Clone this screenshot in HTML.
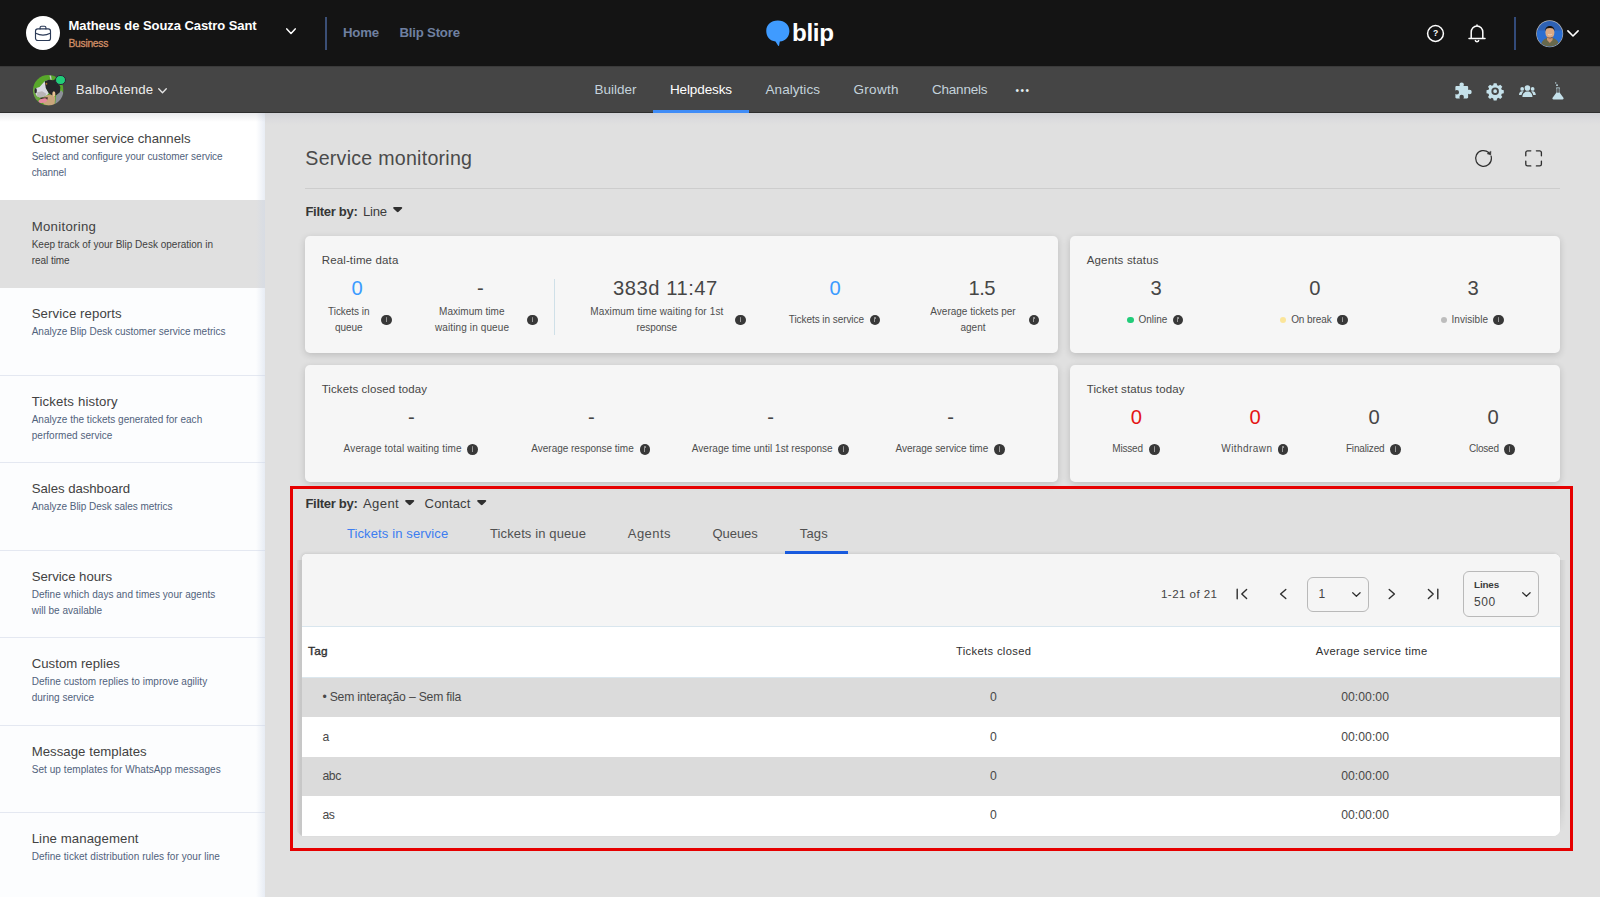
<!DOCTYPE html>
<html lang="en">
<head>
<meta charset="utf-8">
<title>Blip - Service monitoring</title>
<style>
*{box-sizing:border-box;margin:0;padding:0}
html,body{width:1600px;height:897px;overflow:hidden}
body{position:relative;background:#e0e0e0;font-family:"Liberation Sans",sans-serif;color:#3c3c3c}
.abs{position:absolute}
.t{position:absolute;white-space:nowrap;line-height:1}
#topbar{position:absolute;left:0;top:0;width:1600px;height:66px;background:#141414}
#subbar{position:absolute;left:0;top:66px;width:1600px;height:46.5px;background:#454545;border-top:1px solid #3a3a3a;border-bottom:1.200px solid #2e2e2e}
#sidebar{position:absolute;left:0;top:112.5px;width:265px;height:785px;background:#fcfdfe}
#sbedge{position:absolute;left:256px;top:112.5px;width:9px;height:785px;background:linear-gradient(90deg,rgba(205,215,232,0),rgba(205,215,232,.45))}
.sitem{position:absolute;left:0;width:265px;height:88.300px;border-bottom:1px solid #e4e8f1}
.sitem.first{background:#fff;border-bottom:none;height:87.500px}
.sitem.sel{background:#e0e0e0;border-bottom:none;height:87.700px}
.card{position:absolute;background:#f6f6f6;border-radius:5px;box-shadow:0 2px 7px rgba(0,0,0,.16)}
.info{position:absolute;width:10.8px;height:10.8px;border-radius:50%;background:#383838}
.info:after{content:"";position:absolute;left:4.9px;top:4.6px;width:1px;height:3.2px;background:#9a9a9a}
.info:before{content:"";position:absolute;left:4.8px;top:2.7px;width:1.2px;height:1.2px;border-radius:50%;background:#9a9a9a}
.dot{position:absolute;width:6.4px;height:6.4px;border-radius:50%}
.caret{position:absolute;width:9.400px;height:5.200px}
#redbox{position:absolute;left:290.200px;top:486.200px;width:1283px;height:365.300px;border:3px solid #e60000}
#tablecard{position:absolute;left:301.600px;top:554px;width:1258.600px;height:282px;background:#fff;border-radius:5px 6px 7px 0;overflow:hidden}
#tshadow{position:absolute;left:301.600px;top:554px;width:1258.600px;height:282px;border-radius:5px 6px 7px 0;box-shadow:-1px -1px 3px rgba(0,0,0,.09)}
#tstripr{position:absolute;left:1560.200px;top:560px;width:6px;height:272px;background:linear-gradient(90deg,rgba(0,0,0,.085),rgba(0,0,0,0));-webkit-mask-image:linear-gradient(#000 90%,transparent);mask-image:linear-gradient(#000 90%,transparent)}
#tstrip{position:absolute;left:296.600px;top:560px;width:5px;height:276px;background:linear-gradient(90deg,rgba(0,0,0,.03),rgba(0,0,0,.10));clip-path:polygon(0 0,100% 0,100% 100%,0 calc(100% - 5px))}
.row{position:absolute;left:0;width:1259px}
.sel-box{position:absolute;border:1px solid #b9b9b9;border-radius:6px;background:#f5f5f5}
svg{position:absolute;overflow:visible}
</style>
</head>
<body>

<!-- ===== top bar ===== -->
<div id="topbar"></div>
<div class="abs" style="left:26px;top:16px;width:34px;height:34px;border-radius:50%;background:#fff"></div>
<svg style="left:34px;top:24px" width="18" height="18" viewBox="0 0 18 18" fill="none" stroke="#2b3a57" stroke-width="1.150" stroke-linecap="round" stroke-linejoin="round">
  <rect x="1.500" y="4.900" width="15" height="11.600" rx="2.300"/>
  <path d="M6.100 4.900V3.600a1.400 1.400 0 0 1 1.400-1.400h3a1.400 1.400 0 0 1 1.400 1.400v1.300"/>
  <path d="M1.700 9.300c4.600 2.300 10 2.300 14.600 0"/>
</svg>
<svg style="left:286px;top:28px" width="10" height="7" viewBox="0 0 10 7" fill="none" stroke="#fff" stroke-width="1.5" stroke-linecap="round" stroke-linejoin="round"><path d="M0.8 0.9 5 5.4 9.2 0.9"/></svg>
<div class="abs" style="left:325px;top:16.5px;width:1.5px;height:33px;background:#3b4f76"></div>

<!-- logo -->
<svg style="left:765px;top:19px" width="26" height="28" viewBox="0 0 26 28">
  <path d="M12.800 1.600C5.800 1.600 1.250 5.800 1.250 12c0 5.800 3.750 9.800 9.250 10.500l2.500 4.100c.3.500 1 .400 1.100-.200l.700-3.800C20.600 22 24.400 17.800 24.400 12 24.400 5.800 19.800 1.600 12.800 1.600z" fill="#3f9bff"/>
</svg>

<!-- right icons -->
<svg style="left:1426px;top:24px" width="19" height="19" viewBox="0 0 19 19" fill="none" stroke="#fff" stroke-width="1.5"><circle cx="9.5" cy="9.5" r="7.9"/></svg>
<svg style="left:1467px;top:21.700px" width="20" height="21" viewBox="0 0 20 21" fill="none" stroke="#fff" stroke-width="1.5" stroke-linecap="round" stroke-linejoin="round">
  <path d="M2 16.600h16M4.2 16.400V10.200a5.800 6.300 0 0 1 11.600 0v6.200M10 3.600V2.900"/>
  <path d="M8.300 18.600a1.800 1.600 0 0 0 3.400 0"/>
</svg>
<div class="abs" style="left:1514.2px;top:16.5px;width:1.6px;height:33.5px;background:#334b7a"></div>
<!-- avatar -->
<svg style="left:1535.600px;top:19.500px" width="27.400" height="27.400" viewBox="0 0 27.400 27.400">
  <defs><clipPath id="av"><circle cx="13.700" cy="13.700" r="12.700"/></clipPath></defs>
  <circle cx="13.700" cy="13.700" r="13.500" fill="#b4b6ba"/>
  <g clip-path="url(#av)">
    <rect width="27.400" height="27.400" fill="#2f62b4"/>
    <rect y="10.500" width="27.400" height="17" fill="#2c6fd2"/>
    <path d="M4.300 27.400c.6-5.600 3.600-8.300 6.600-9.300l6.200-.1c3.600 1.200 6 4 6.600 9.400z" fill="#67684c"/>
    <path d="M11 16.500h5.600v3.500l-2.800 3-2.800-3z" fill="#c99672"/>
    <ellipse cx="13.900" cy="12.600" rx="4.500" ry="6" fill="#dba983"/>
    <path d="M9.300 11c-.6-6.800 9.800-6.800 9.200 0-.8-2.400-1.600-3-4.600-3s-3.800.6-4.600 3z" fill="#16110e"/>
    <path d="M10.600 16.200c1 2.600 5.400 2.800 6.600.2-1 .9-1.800 1.400-3.300 1.400s-2.400-.6-3.300-1.600z" fill="#1a1320"/>
    <path d="M11.900 14.300c1 .8 2.900.8 3.900 0" stroke="#f3e3d8" stroke-width="0.700" fill="none"/>
  </g>
</svg>
<svg style="left:1567px;top:30px" width="12" height="8" viewBox="0 0 12 8" fill="none" stroke="#fff" stroke-width="1.6" stroke-linecap="round" stroke-linejoin="round"><path d="M0.9 0.9 6 6 11.100 0.900"/></svg>

<!-- ===== sub bar ===== -->
<div id="subbar"></div>
<!-- bot avatar -->
<svg style="left:33.100px;top:74.700px" width="30.500" height="30.500" viewBox="0 0 30 30">
  <defs><clipPath id="bv"><circle cx="15" cy="15" r="15"/></clipPath><filter id="bl" x="-10%" y="-10%" width="120%" height="120%"><feGaussianBlur stdDeviation="0.45"/></filter></defs>
  <g clip-path="url(#bv)"><g filter="url(#bl)">
    <rect width="30" height="30" fill="#58a72c"/>
    <path d="M0 12l4 4 2 8-6 2z" fill="#6aa740"/>
    <path d="M16.200 0.500l1 4.200 1.200-.1-.7-4.100z" fill="#c9c9d0"/>
    <path d="M22.800 20l5.100-5.100 2.100 3-2.100 7.200-6.100 4.100z" fill="#8d9098"/>
    <path d="M13.600 20l5.100-1 3.100 3-.5 7.200-5.700 1.100-5.100-1.600L9 23z" fill="#c9a57c"/>
    <path d="M1.800 13.300l4.600-1.500 5.100-5.600 3.100-1.100-2 7.700 3 5.100-2 2.100-5.100 2-4.700-1-2-4.100z" fill="#d9d9e2"/>
    <path d="M4 17l5-1 4 2.500-1 2.500-5 1.500-3-1.500z" fill="#b9b5b8"/>
    <path d="M11.500 6.200l4.100-1.600 4.100.5 3.100-1.500 4.100 8.200-.5 5.100-3.600 3.100h-4.100l-3.100-2.100-3-5.100z" fill="#26272b"/>
    <ellipse cx="20.500" cy="18.700" rx="1.500" ry="2.600" fill="#e8c090"/>
    <ellipse cx="13.200" cy="8.600" rx="0.900" ry="1.100" fill="#b87333"/>
    <ellipse cx="2.600" cy="15.500" rx="1.200" ry="2.600" fill="#2b2b2e"/>
    <path d="M7 22.300l7.600-.3-.6 2.400-5 1.600z" fill="#3a2a2a"/>
    <ellipse cx="9.600" cy="25.300" rx="4.300" ry="2.100" fill="#e58aa0" transform="rotate(-12 9.600 25.300)"/>
  </g></g>
</svg>
<div class="abs" style="left:55.300px;top:75px;width:10.400px;height:10.400px;border-radius:50%;background:#21cc79;border:1.100px solid #2b2238"></div>
<svg style="left:158px;top:88px" width="9" height="6" viewBox="0 0 9 6" fill="none" stroke="#e6e6e6" stroke-width="1.300" stroke-linecap="round" stroke-linejoin="round"><path d="M0.700 0.800 4.500 4.800 8.300 0.800"/></svg>
<div class="abs" style="left:653.200px;top:110.200px;width:95.800px;height:2.500px;background:#3f8cf7"></div>

<!-- sub bar right icons -->
<svg style="left:1454.600px;top:82.200px" width="17.400" height="17.400" viewBox="0 0 18 18" fill="#c5e1ea">
  <path d="M6.900 0.400a2.300 2.300 0 0 1 2.300 2.300c0 .5-.2 1-.4 1.400h3.600c.7 0 1.200.5 1.200 1.200v3.100c.4-.3.900-.4 1.400-.4a2.300 2.300 0 0 1 0 4.600c-.5 0-1-.2-1.400-.4v3.700c0 .7-.5 1.200-1.200 1.200H8.700c.3-.4.500-.9.500-1.500a2.300 2.300 0 0 0-4.600 0c0 .6.200 1.100.5 1.500H1.600c-.7 0-1.200-.5-1.200-1.200v-3.500c.4.300.9.500 1.500.5a2.300 2.300 0 0 0 0-4.600c-.6 0-1.100.2-1.500.5V5.300c0-.7.500-1.200 1.200-1.200H5c-.3-.4-.4-.9-.4-1.400A2.300 2.300 0 0 1 6.900.4z"/>
</svg>
<svg style="left:1486.800px;top:82.500px" width="16.300" height="16.300" viewBox="-10 -10 20 20" fill="#c5e1ea">
  <path fill-rule="evenodd" d="M-1.800-9.800h3.600l.6 2.500 1.700.7 2.200-1.400 2.500 2.500-1.400 2.200.7 1.700 2.500.6v3.600l-2.500.6-.7 1.700 1.400 2.200-2.500 2.500-2.200-1.400-1.700.7-.6 2.500h-3.600l-.6-2.500-1.700-.7-2.200 1.400-2.500-2.500 1.400-2.200-.7-1.700-2.500-.6v-3.600l2.500-.6.7-1.700-1.400-2.200 2.500-2.500 2.200 1.400 1.700-.7zM0-4.600a4.600 4.600 0 1 0 0 9.200 4.600 4.600 0 0 0 0-9.200zM0-2.300a2.300 2.300 0 1 1 0 4.600 2.300 2.300 0 0 1 0-4.600z"/>
</svg>
<svg style="left:1518.600px;top:84.800px" width="16.800" height="12.200" viewBox="0 0 18 13" fill="#c5e1ea">
  <circle cx="9" cy="3.200" r="3"/><path d="M3.600 12.800c0-3.600 2.200-5.800 5.400-5.800s5.400 2.200 5.400 5.800z"/>
  <circle cx="3.400" cy="4.200" r="2"/><path d="M0 10.600c0-2.400 1.400-4 3.400-4 .6 0 1.100.1 1.500.4-1.200 1-1.900 2.200-2.200 3.600z"/>
  <circle cx="14.600" cy="4.200" r="2"/><path d="M18 10.600c0-2.400-1.400-4-3.400-4-.6 0-1.100.1-1.500.4 1.200 1 1.900 2.200 2.200 3.600z"/>
</svg>
<svg style="left:1552px;top:82px" width="12" height="17.500" viewBox="0 0 12 17.500" fill="#c5e1ea">
  <path d="M4.200 5.400h3.600v1H7.400v3.800l4 5.600c.5.800 0 1.700-.9 1.700H1.500c-.9 0-1.400-.9-.9-1.700l4-5.600V6.400H4.200z"/>
  <rect x="5.200" y="6.200" width="1.600" height="4.500" fill="#454545"/>
  <circle cx="5" cy="3.200" r="0.900"/><circle cx="3.700" cy="0.900" r="0.700"/>
</svg>

<!-- ===== sidebar ===== -->
<div id="sidebar"></div>
<div class="sitem first" style="top:112.500px"></div>
<div class="sitem sel" style="top:200px"></div>
<div class="sitem" style="top:287.500px"></div>
<div class="sitem" style="top:375px"></div>
<div class="sitem" style="top:462.500px"></div>
<div class="sitem" style="top:550px"></div>
<div class="sitem" style="top:637.500px"></div>
<div class="sitem" style="top:725px"></div>
<div class="sitem" style="top:812.500px;border-bottom:none"></div>

<div id="sbedge"></div>
<!-- ===== main ===== -->
<div class="abs" style="left:0;top:112.500px;width:265px;height:9px;background:linear-gradient(rgba(120,125,140,.16),rgba(120,125,140,0))"></div>
<div class="abs" style="left:265px;top:112.500px;width:1335px;height:12px;background:linear-gradient(#d2d3d7,#dcdcde 60%,#e0e0e0)"></div>
<div class="abs" style="left:305px;top:188px;width:1255px;height:1px;background:#cdcdcd"></div>
<!-- refresh -->
<svg style="left:1474px;top:149px" width="19" height="19" viewBox="0 0 19 19" fill="none" stroke="#2f2f2f" stroke-width="1.200" stroke-linecap="round">
  <path d="M14.700 3.500A7.900 7.900 0 1 0 17.400 9.200c0-.8-.1-1.500-.3-2.200"/>
  <path d="M16.900 2.500l-.2 3.500-3.300-1.200z" fill="#2f2f2f" stroke-width="0.500" stroke-linejoin="round"/>
</svg>
<!-- fullscreen -->
<svg style="left:1524.600px;top:150px" width="17.200" height="16.800" viewBox="0 0 17.500 17" fill="none" stroke="#2f2f2f" stroke-width="1.350" stroke-linecap="round" stroke-linejoin="round">
  <path d="M0.800 5.800V2.600a1.800 1.800 0 0 1 1.800-1.800h3.300M11.600 0.800h3.300a1.800 1.800 0 0 1 1.800 1.800v3.200M16.700 11.200v3.200a1.800 1.800 0 0 1-1.800 1.800h-3.300M5.900 16.200H2.600a1.800 1.800 0 0 1-1.800-1.800v-3.200"/>
</svg>
<svg class="caret" style="left:393px;top:207.200px" viewBox="0 0 9.4 5.2"><path d="M1.100 0h7.200c.9 0 1.300.9.700 1.500L5.600 4.800c-.5.500-1.300.5-1.800 0L.400 1.500C-.200.900.200 0 1.100 0z" fill="#303030"/></svg>

<!-- cards -->
<div class="card" style="left:305px;top:236px;width:752.500px;height:116.500px"></div>
<div class="card" style="left:1070px;top:236px;width:490px;height:116.500px"></div>
<div class="card" style="left:305px;top:365px;width:752.500px;height:116.500px"></div>
<div class="card" style="left:1070px;top:365px;width:490px;height:116.500px"></div>
<div class="abs" style="left:554px;top:279px;width:1px;height:56px;background:#cfe0e8"></div>

<div class="info" style="left:381.3px;top:314.7px"></div>
<div class="info" style="left:527.1px;top:314.7px"></div>
<div class="info" style="left:735.2px;top:314.7px"></div>
<div class="info" style="left:869.6px;top:314.7px"></div>
<div class="info" style="left:1028.6px;top:314.7px"></div>
<div class="info" style="left:1172.6px;top:314.7px"></div>
<div class="info" style="left:1337.1px;top:314.7px"></div>
<div class="info" style="left:1493.3px;top:314.7px"></div>
<div class="info" style="left:466.9px;top:443.8px"></div>
<div class="info" style="left:639.6px;top:443.8px"></div>
<div class="info" style="left:838.0px;top:443.8px"></div>
<div class="info" style="left:994.0px;top:443.8px"></div>
<div class="info" style="left:1148.8px;top:443.8px"></div>
<div class="info" style="left:1277.6px;top:443.8px"></div>
<div class="info" style="left:1390.1px;top:443.8px"></div>
<div class="info" style="left:1504.1px;top:443.8px"></div>
<div class="dot" style="left:1127.3px;top:316.7px;background:#21cc79"></div>
<div class="dot" style="left:1279.8px;top:316.7px;background:#fbe59a"></div>
<div class="dot" style="left:1440.5px;top:316.7px;background:#bdbdbd"></div>

<!-- red highlight + table -->
<svg class="caret" style="left:404.800px;top:500.100px" viewBox="0 0 9.4 5.2"><path d="M1.100 0h7.200c.9 0 1.300.9.700 1.500L5.600 4.800c-.5.500-1.300.5-1.800 0L.400 1.500C-.200.900.200 0 1.100 0z" fill="#303030"/></svg>
<svg class="caret" style="left:476.800px;top:500.100px" viewBox="0 0 9.4 5.2"><path d="M1.100 0h7.200c.9 0 1.300.9.700 1.500L5.600 4.800c-.5.500-1.300.5-1.800 0L.400 1.500C-.200.900.200 0 1.100 0z" fill="#303030"/></svg>
<div class="abs" style="left:785.400px;top:551.200px;width:62.200px;height:2.800px;background:#1a5ee6"></div>
<div id="tshadow"></div><div id="tstrip"></div><div id="tstripr"></div>
<div id="tablecard">
  <div class="row" style="top:0;height:73px;background:#f5f5f5;border-bottom:1.200px solid #d9e6ee"></div>
  <div class="row" style="top:73px;height:51.200px;background:#fff;border-bottom:1.300px solid #dbe7ee"></div>
  <div class="row" style="top:124.200px;height:38.600px;background:#dbdbdb"></div>
  <div class="row" style="top:162.800px;height:39.800px;background:#fff"></div>
  <div class="row" style="top:202.600px;height:39.600px;background:#dbdbdb"></div>
  <div class="row" style="top:242.200px;height:39.800px;background:#fff"></div>
</div>
<div class="sel-box" style="left:1307px;top:577px;width:62px;height:34.500px"></div>
<div class="sel-box" style="left:1463px;top:571.200px;width:76px;height:45.500px"></div>
<!-- pagination icons -->
<svg style="left:1236px;top:588px" width="12" height="12" viewBox="0 0 12 12" fill="none" stroke="#2f2f2f" stroke-width="1.400" stroke-linecap="round" stroke-linejoin="round"><path d="M1.200 1.200v9.600M10.600 1.400 5.800 6l4.800 4.600"/></svg>
<svg style="left:1278.500px;top:588px" width="8" height="12" viewBox="0 0 8 12" fill="none" stroke="#2f2f2f" stroke-width="1.400" stroke-linecap="round" stroke-linejoin="round"><path d="M6.800 1.400 1.600 6l5.200 4.600"/></svg>
<svg style="left:1388px;top:588px" width="8" height="12" viewBox="0 0 8 12" fill="none" stroke="#2f2f2f" stroke-width="1.400" stroke-linecap="round" stroke-linejoin="round"><path d="M1.200 1.400 6.400 6l-5.200 4.600"/></svg>
<svg style="left:1427px;top:588px" width="12" height="12" viewBox="0 0 12 12" fill="none" stroke="#2f2f2f" stroke-width="1.400" stroke-linecap="round" stroke-linejoin="round"><path d="M10.800 1.200v9.600M1.400 1.400 6.200 6l-4.800 4.600"/></svg>
<svg style="left:1352.200px;top:591.600px" width="8.800" height="5.300" viewBox="0 0 10 6" fill="none" stroke="#2f2f2f" stroke-width="1.400" stroke-linecap="round" stroke-linejoin="round"><path d="M0.800 0.800 5 4.800 9.200 0.800"/></svg>
<svg style="left:1522.200px;top:591.600px" width="8.800" height="5.300" viewBox="0 0 10 6" fill="none" stroke="#2f2f2f" stroke-width="1.400" stroke-linecap="round" stroke-linejoin="round"><path d="M0.800 0.800 5 4.800 9.200 0.800"/></svg>

<div id="redbox"></div>

<div class="t" id="t0" style="top:19.30px;font-size:13px;color:#ffffff;font-weight:700;letter-spacing:-0.066px;left:68.50px;">Matheus de Souza Castro Sant</div>
<div class="t" id="t1" style="top:38.88px;font-size:10.3px;color:#d08e66;letter-spacing:-0.283px;left:68.50px;-webkit-text-stroke:0.3px #d08e66;">Business</div>
<div class="t" id="t2" style="top:25.83px;font-size:13.2px;color:#6f80a0;font-weight:700;letter-spacing:-0.214px;left:343.00px;">Home</div>
<div class="t" id="t3" style="top:25.83px;font-size:13.2px;color:#6f80a0;font-weight:700;letter-spacing:-0.198px;left:399.50px;">Blip Store</div>
<div class="t" id="t4" style="top:20.51px;font-size:24.2px;color:#ffffff;font-weight:700;letter-spacing:-0.333px;left:792.00px;">blip</div>
<div class="t" id="t5" style="top:29.32px;font-size:8.6px;color:#ffffff;font-weight:700;left:1435.60px;transform:translateX(-50%);">?</div>
<div class="t" id="t6" style="top:82.53px;font-size:13.2px;color:#ececec;letter-spacing:0.167px;left:75.80px;">BalboAtende</div>
<div class="t" id="t7" style="top:82.97px;font-size:13.5px;color:#c4d3dc;letter-spacing:-0.005px;left:594.50px;">Builder</div>
<div class="t" id="t8" style="top:82.97px;font-size:13.5px;color:#ffffff;letter-spacing:-0.129px;left:670.00px;">Helpdesks</div>
<div class="t" id="t9" style="top:82.97px;font-size:13.5px;color:#c4d3dc;letter-spacing:0.059px;left:765.50px;">Analytics</div>
<div class="t" id="t10" style="top:82.97px;font-size:13.5px;color:#c4d3dc;letter-spacing:0.297px;left:853.50px;">Growth</div>
<div class="t" id="t11" style="top:82.97px;font-size:13.5px;color:#c4d3dc;letter-spacing:-0.221px;left:932.00px;">Channels</div>
<div class="t" id="t12" style="top:85.53px;font-size:10px;color:#e4eef2;letter-spacing:1.500px;left:1015.50px;">•••</div>
<div class="t" id="t13" style="top:132.23px;font-size:13.2px;color:#424242;letter-spacing:-0.011px;left:31.70px;">Customer service channels</div>
<div class="t" id="t14" style="top:152.13px;font-size:10.0px;color:#51627c;letter-spacing:-0.019px;left:31.70px;">Select and configure your customer service</div>
<div class="t" id="t15" style="top:168.13px;font-size:10.0px;color:#51627c;letter-spacing:-0.089px;left:31.70px;">channel</div>
<div class="t" id="t16" style="top:219.73px;font-size:13.2px;color:#424242;letter-spacing:0.291px;left:31.70px;">Monitoring</div>
<div class="t" id="t17" style="top:239.63px;font-size:10.0px;color:#3f3f3f;letter-spacing:0.002px;left:31.70px;">Keep track of your Blip Desk operation in</div>
<div class="t" id="t18" style="top:255.64px;font-size:10.0px;color:#3f3f3f;letter-spacing:-0.045px;left:31.70px;">real time</div>
<div class="t" id="t19" style="top:307.23px;font-size:13.2px;color:#424242;letter-spacing:0.094px;left:31.70px;">Service reports</div>
<div class="t" id="t20" style="top:327.14px;font-size:10.0px;color:#51627c;letter-spacing:-0.004px;left:31.70px;">Analyze Blip Desk customer service metrics</div>
<div class="t" id="t21" style="top:394.73px;font-size:13.2px;color:#424242;letter-spacing:0.158px;left:31.70px;">Tickets history</div>
<div class="t" id="t22" style="top:414.64px;font-size:10.0px;color:#51627c;letter-spacing:0.011px;left:31.70px;">Analyze the tickets generated for each</div>
<div class="t" id="t23" style="top:430.64px;font-size:10.0px;color:#51627c;letter-spacing:0.042px;left:31.70px;">performed service</div>
<div class="t" id="t24" style="top:482.23px;font-size:13.2px;color:#424242;letter-spacing:-0.035px;left:31.70px;">Sales dashboard</div>
<div class="t" id="t25" style="top:502.14px;font-size:10.0px;color:#51627c;letter-spacing:-0.031px;left:31.70px;">Analyze Blip Desk sales metrics</div>
<div class="t" id="t26" style="top:569.73px;font-size:13.2px;color:#424242;letter-spacing:-0.028px;left:31.70px;">Service hours</div>
<div class="t" id="t27" style="top:589.63px;font-size:10.0px;color:#51627c;letter-spacing:0.036px;left:31.70px;">Define which days and times your agents</div>
<div class="t" id="t28" style="top:605.63px;font-size:10.0px;color:#51627c;letter-spacing:0.028px;left:31.70px;">will be available</div>
<div class="t" id="t29" style="top:657.23px;font-size:13.2px;color:#424242;letter-spacing:0.019px;left:31.70px;">Custom replies</div>
<div class="t" id="t30" style="top:677.13px;font-size:10.0px;color:#51627c;letter-spacing:0.039px;left:31.70px;">Define custom replies to improve agility</div>
<div class="t" id="t31" style="top:693.13px;font-size:10.0px;color:#51627c;letter-spacing:0.018px;left:31.70px;">during service</div>
<div class="t" id="t32" style="top:744.73px;font-size:13.2px;color:#424242;letter-spacing:0.040px;left:31.70px;">Message templates</div>
<div class="t" id="t33" style="top:764.63px;font-size:10.0px;color:#51627c;letter-spacing:0.060px;left:31.70px;">Set up templates for WhatsApp messages</div>
<div class="t" id="t34" style="top:832.23px;font-size:13.2px;color:#424242;letter-spacing:0.087px;left:31.70px;">Line management</div>
<div class="t" id="t35" style="top:852.13px;font-size:10.0px;color:#51627c;letter-spacing:0.057px;left:31.70px;">Define ticket distribution rules for your line</div>
<div class="t" id="t36" style="top:148.61px;font-size:19.6px;color:#4a4a4a;letter-spacing:0.261px;left:305.30px;">Service monitoring</div>
<div class="t" id="t37" style="top:204.71px;font-size:13.1px;color:#363636;font-weight:700;letter-spacing:-0.311px;left:305.40px;">Filter by:</div>
<div class="t" id="t38" style="top:204.71px;font-size:13.1px;color:#3c3c3c;letter-spacing:-0.255px;left:363.00px;">Line</div>
<div class="t" id="t39" style="top:255.07px;font-size:11.5px;color:#464646;letter-spacing:0.139px;left:321.70px;">Real-time data</div>
<div class="t" id="t40" style="top:255.07px;font-size:11.5px;color:#464646;letter-spacing:0.176px;left:1086.70px;">Agents status</div>
<div class="t" id="t41" style="top:384.07px;font-size:11.5px;color:#464646;letter-spacing:0.081px;left:321.70px;">Tickets closed today</div>
<div class="t" id="t42" style="top:384.07px;font-size:11.5px;color:#464646;letter-spacing:0.130px;left:1086.70px;">Ticket status today</div>
<div class="t" id="t43" style="top:277.70px;font-size:20.2px;color:#3b9bff;left:357.20px;transform:translateX(-50%);">0</div>
<div class="t" id="t44" style="top:277.70px;font-size:20.2px;color:#464646;left:480.30px;transform:translateX(-50%);">-</div>
<div class="t" id="t45" style="top:277.70px;font-size:20.2px;color:#464646;letter-spacing:0.517px;left:665.46px;transform:translateX(-50%);">383d 11:47</div>
<div class="t" id="t46" style="top:277.70px;font-size:20.2px;color:#3b9bff;left:835.00px;transform:translateX(-50%);">0</div>
<div class="t" id="t47" style="top:277.70px;font-size:20.2px;color:#464646;letter-spacing:-0.450px;left:981.77px;transform:translateX(-50%);">1.5</div>
<div class="t" id="t48" style="top:306.84px;font-size:10.0px;color:#4e4e4e;letter-spacing:-0.031px;left:348.78px;transform:translateX(-50%);">Tickets in</div>
<div class="t" id="t49" style="top:322.54px;font-size:10.0px;color:#4e4e4e;letter-spacing:-0.103px;left:348.75px;transform:translateX(-50%);">queue</div>
<div class="t" id="t50" style="top:306.84px;font-size:10.0px;color:#4e4e4e;letter-spacing:0.044px;left:471.82px;transform:translateX(-50%);">Maximum time</div>
<div class="t" id="t51" style="top:322.54px;font-size:10.0px;color:#4e4e4e;letter-spacing:0.115px;left:472.06px;transform:translateX(-50%);">waiting in queue</div>
<div class="t" id="t52" style="top:306.84px;font-size:10.0px;color:#4e4e4e;letter-spacing:0.134px;left:656.87px;transform:translateX(-50%);">Maximum time waiting for 1st</div>
<div class="t" id="t53" style="top:322.54px;font-size:10.0px;color:#4e4e4e;letter-spacing:-0.106px;left:656.75px;transform:translateX(-50%);">response</div>
<div class="t" id="t54" style="top:314.54px;font-size:10.0px;color:#4e4e4e;letter-spacing:-0.060px;left:826.37px;transform:translateX(-50%);">Tickets in service</div>
<div class="t" id="t55" style="top:306.84px;font-size:10.0px;color:#4e4e4e;letter-spacing:-0.007px;left:973.00px;transform:translateX(-50%);">Average tickets per</div>
<div class="t" id="t56" style="top:322.54px;font-size:10.0px;color:#4e4e4e;letter-spacing:-0.008px;left:973.00px;transform:translateX(-50%);">agent</div>
<div class="t" id="t57" style="top:277.70px;font-size:20.2px;color:#464646;left:1156.20px;transform:translateX(-50%);">3</div>
<div class="t" id="t58" style="top:277.70px;font-size:20.2px;color:#464646;left:1314.80px;transform:translateX(-50%);">0</div>
<div class="t" id="t59" style="top:277.70px;font-size:20.2px;color:#464646;left:1473.00px;transform:translateX(-50%);">3</div>
<div class="t" id="t60" style="top:314.54px;font-size:10.0px;color:#4e4e4e;letter-spacing:-0.041px;left:1138.60px;">Online</div>
<div class="t" id="t61" style="top:314.54px;font-size:10.0px;color:#4e4e4e;letter-spacing:-0.092px;left:1291.20px;">On break</div>
<div class="t" id="t62" style="top:314.54px;font-size:10.0px;color:#4e4e4e;letter-spacing:0.045px;left:1451.50px;">Invisible</div>
<div class="t" id="t63" style="top:406.70px;font-size:20.2px;color:#464646;left:411.40px;transform:translateX(-50%);">-</div>
<div class="t" id="t64" style="top:406.70px;font-size:20.2px;color:#464646;left:591.30px;transform:translateX(-50%);">-</div>
<div class="t" id="t65" style="top:406.70px;font-size:20.2px;color:#464646;left:770.70px;transform:translateX(-50%);">-</div>
<div class="t" id="t66" style="top:406.70px;font-size:20.2px;color:#464646;left:950.60px;transform:translateX(-50%);">-</div>
<div class="t" id="t67" style="top:443.84px;font-size:10.0px;color:#4e4e4e;letter-spacing:0.147px;left:343.60px;">Average total waiting time</div>
<div class="t" id="t68" style="top:443.84px;font-size:10.0px;color:#4e4e4e;letter-spacing:-0.013px;left:531.30px;">Average response time</div>
<div class="t" id="t69" style="top:443.84px;font-size:10.0px;color:#4e4e4e;letter-spacing:0.033px;left:691.80px;">Average time until 1st response</div>
<div class="t" id="t70" style="top:443.84px;font-size:10.0px;color:#4e4e4e;letter-spacing:-0.026px;left:895.50px;">Average service time</div>
<div class="t" id="t71" style="top:406.70px;font-size:20.2px;color:#e41414;left:1136.30px;transform:translateX(-50%);">0</div>
<div class="t" id="t72" style="top:406.70px;font-size:20.2px;color:#e41414;left:1255.00px;transform:translateX(-50%);">0</div>
<div class="t" id="t73" style="top:406.70px;font-size:20.2px;color:#464646;left:1374.20px;transform:translateX(-50%);">0</div>
<div class="t" id="t74" style="top:406.70px;font-size:20.2px;color:#464646;left:1493.00px;transform:translateX(-50%);">0</div>
<div class="t" id="t75" style="top:443.84px;font-size:10.0px;color:#4e4e4e;letter-spacing:-0.198px;left:1112.30px;">Missed</div>
<div class="t" id="t76" style="top:443.84px;font-size:10.0px;color:#4e4e4e;letter-spacing:0.431px;left:1221.30px;">Withdrawn</div>
<div class="t" id="t77" style="top:443.84px;font-size:10.0px;color:#4e4e4e;letter-spacing:-0.154px;left:1345.90px;">Finalized</div>
<div class="t" id="t78" style="top:443.84px;font-size:10.0px;color:#4e4e4e;letter-spacing:-0.228px;left:1469.00px;">Closed</div>
<div class="t" id="t79" style="top:497.21px;font-size:13.1px;color:#363636;font-weight:700;letter-spacing:-0.311px;left:305.40px;">Filter by:</div>
<div class="t" id="t80" style="top:497.21px;font-size:13.1px;color:#3c3c3c;letter-spacing:0.370px;left:363.00px;">Agent</div>
<div class="t" id="t81" style="top:497.21px;font-size:13.1px;color:#3c3c3c;letter-spacing:0.112px;left:424.60px;">Contact</div>
<div class="t" id="t82" style="top:526.70px;font-size:13.0px;color:#3c7df0;letter-spacing:0.122px;left:346.90px;">Tickets in service</div>
<div class="t" id="t83" style="top:526.70px;font-size:13.0px;color:#505050;letter-spacing:0.114px;left:490.00px;">Tickets in queue</div>
<div class="t" id="t84" style="top:526.70px;font-size:13.0px;color:#505050;letter-spacing:0.463px;left:627.80px;">Agents</div>
<div class="t" id="t85" style="top:526.70px;font-size:13.0px;color:#505050;letter-spacing:-0.049px;left:712.50px;">Queues</div>
<div class="t" id="t86" style="top:526.70px;font-size:13.0px;color:#505050;letter-spacing:0.144px;left:799.80px;">Tags</div>
<div class="t" id="t87" style="top:587.78px;font-size:11.6px;color:#444444;letter-spacing:0.420px;left:1161.00px;">1-21 of 21</div>
<div class="t" id="t88" style="top:588.04px;font-size:12px;color:#444444;left:1318.60px;">1</div>
<div class="t" id="t89" style="top:580.12px;font-size:9.9px;color:#3c3c3c;font-weight:700;letter-spacing:-0.149px;left:1474.00px;">Lines</div>
<div class="t" id="t90" style="top:596.14px;font-size:12px;color:#444444;letter-spacing:0.634px;left:1474.00px;">500</div>
<div class="t" id="t91" style="top:646.01px;font-size:11.8px;color:#2f2f2f;letter-spacing:0.284px;left:308.00px;-webkit-text-stroke:0.35px #2f2f2f;">Tag</div>
<div class="t" id="t92" style="top:645.52px;font-size:11.2px;color:#2f2f2f;letter-spacing:0.349px;left:956.00px;">Tickets closed</div>
<div class="t" id="t93" style="top:645.52px;font-size:11.2px;color:#2f2f2f;letter-spacing:0.375px;left:1315.80px;">Average service time</div>
<div class="t" id="t94" style="top:691.27px;font-size:12.2px;color:#484848;letter-spacing:-0.196px;left:322.40px;">• Sem interação – Sem fila</div>
<div class="t" id="t95" style="top:691.27px;font-size:12.2px;color:#484848;left:993.40px;transform:translateX(-50%);">0</div>
<div class="t" id="t96" style="top:691.27px;font-size:12.2px;color:#484848;letter-spacing:0.050px;left:1365.12px;transform:translateX(-50%);">00:00:00</div>
<div class="t" id="t97" style="top:730.67px;font-size:12.2px;color:#484848;left:322.40px;">a</div>
<div class="t" id="t98" style="top:730.67px;font-size:12.2px;color:#484848;left:993.40px;transform:translateX(-50%);">0</div>
<div class="t" id="t99" style="top:730.67px;font-size:12.2px;color:#484848;letter-spacing:0.050px;left:1365.12px;transform:translateX(-50%);">00:00:00</div>
<div class="t" id="t100" style="top:770.07px;font-size:12.2px;color:#484848;letter-spacing:-0.328px;left:322.40px;">abc</div>
<div class="t" id="t101" style="top:770.07px;font-size:12.2px;color:#484848;left:993.40px;transform:translateX(-50%);">0</div>
<div class="t" id="t102" style="top:770.07px;font-size:12.2px;color:#484848;letter-spacing:0.050px;left:1365.12px;transform:translateX(-50%);">00:00:00</div>
<div class="t" id="t103" style="top:809.27px;font-size:12.2px;color:#484848;letter-spacing:-0.450px;left:322.40px;">as</div>
<div class="t" id="t104" style="top:809.27px;font-size:12.2px;color:#484848;left:993.40px;transform:translateX(-50%);">0</div>
<div class="t" id="t105" style="top:809.27px;font-size:12.2px;color:#484848;letter-spacing:0.050px;left:1365.12px;transform:translateX(-50%);">00:00:00</div>
</body>
</html>
